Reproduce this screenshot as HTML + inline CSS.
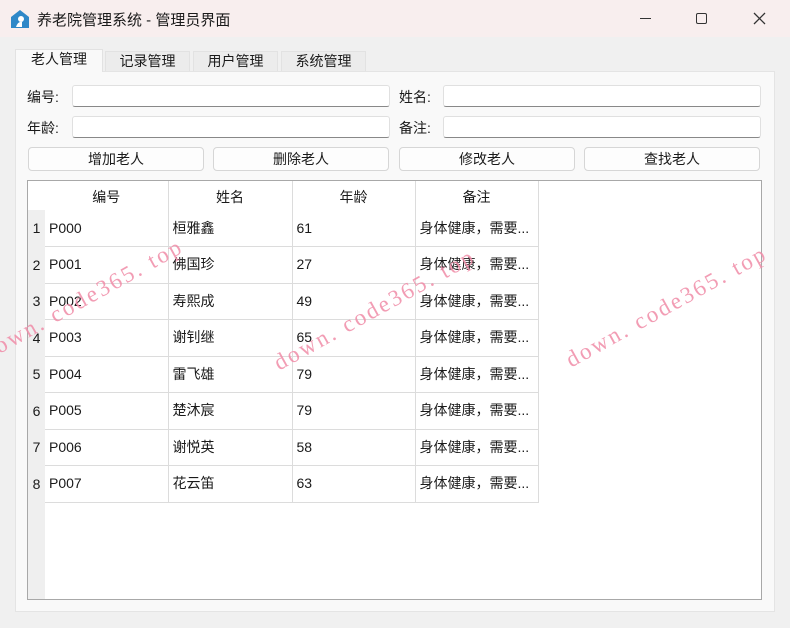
<!DOCTYPE html>
<html><head><meta charset="utf-8"><style>
*{margin:0;padding:0;box-sizing:border-box}
body{width:790px;height:628px;overflow:hidden;background:#f0f0f0;font-family:"Liberation Sans","Noto Sans CJK SC",sans-serif;font-size:14px;color:#1a1a1a;position:relative}
.abs{position:absolute}
.title{left:0;top:0;width:790px;height:37px;background:#f8eeee}
.tab{top:51px;height:20px;background:#ececec;border:1px solid #e2e2e2;border-bottom:none;text-align:center;line-height:19px;font-size:14px}
.pane{left:15px;top:71px;width:760px;height:541px;background:#f9f9f9;border:1px solid #e4e4e4}
.lbl{font-size:14px}
.inp{height:22px;background:#fff;border:1px solid #e0e0e0;border-bottom:1px solid #888;border-radius:3px}
.btn{top:147px;height:24px;background:#fdfdfd;border:1px solid #d6d6d6;border-radius:4px;text-align:center;line-height:22px}
.tbl{left:27px;top:180px;width:735px;height:420px;background:#fff;border:1px solid #a8a8a8}
.rh{left:28px;top:212px;width:17px;height:387px;background:#efefef}
.cell{height:36.5px;border-right:1px solid #dcdcdc;border-bottom:1px solid #dcdcdc;line-height:31px;padding-left:4px}
.wm{color:#f08ca8;font-family:"Liberation Serif",serif;font-size:23px;letter-spacing:2.5px;transform:rotate(-29deg);transform-origin:left bottom;white-space:nowrap;opacity:.85}
</style></head><body>
<div class="abs title"></div>
<svg class="abs" style="left:10px;top:9px" width="20" height="20" viewBox="0 0 20 20"><path d="M10 1 L19 8 L19 19 L1 19 L1 8 Z" fill="#2f88c8"/><circle cx="11" cy="10" r="3" fill="#fff"/><path d="M6 18 Q8 12 12 13 L12 18Z" fill="#fff"/></svg>
<div class="abs" style="left:37px;top:9px;font-size:15px">养老院管理系统 - 管理员界面</div>
<div class="abs" style="left:640px;top:18px;width:11px;height:1px;background:#333"></div>
<div class="abs" style="left:696px;top:13px;width:11px;height:11px;border:1.3px solid #333;border-radius:2px"></div>
<svg class="abs" style="left:753px;top:12px" width="13" height="13"><path d="M1 1L12 12M12 1L1 12" stroke="#333" stroke-width="1.3"/></svg>

<div class="abs pane"></div>
<div class="abs tab" style="left:15px;width:88px;top:49px;height:23px;background:#f9f9f9">老人管理</div>
<div class="abs tab" style="left:105px;width:85px">记录管理</div>
<div class="abs tab" style="left:193px;width:85px">用户管理</div>
<div class="abs tab" style="left:281px;width:85px">系统管理</div>

<div class="abs lbl" style="left:27px;top:87px">编号:</div>
<div class="abs inp" style="left:72px;top:85px;width:318px"></div>
<div class="abs lbl" style="left:399px;top:87px">姓名:</div>
<div class="abs inp" style="left:443px;top:85px;width:318px"></div>
<div class="abs lbl" style="left:27px;top:118px">年龄:</div>
<div class="abs inp" style="left:72px;top:116px;width:318px"></div>
<div class="abs lbl" style="left:399px;top:118px">备注:</div>
<div class="abs inp" style="left:443px;top:116px;width:318px"></div>

<div class="abs btn" style="left:28px;width:176px">增加老人</div>
<div class="abs btn" style="left:213px;width:176px">删除老人</div>
<div class="abs btn" style="left:399px;width:176px">修改老人</div>
<div class="abs btn" style="left:584px;width:176px">查找老人</div>

<div class="abs tbl"></div>
<div class="abs rh"></div>
<div class="abs" style="left:45px;top:181px">
<table style="border-collapse:collapse;font-size:14px">
<tr style="height:31px;text-align:center"><td style="width:123px;border-right:1px solid #dcdcdc">编号</td><td style="width:124px;border-right:1px solid #dcdcdc">姓名</td><td style="width:123px;border-right:1px solid #dcdcdc">年龄</td><td style="width:123px;border-right:1px solid #dcdcdc">备注</td></tr>
</table></div>
<div class="abs" style="left:28px;top:210px;font-size:14px">
<table style="border-collapse:collapse">
<tbody>
<tr><td style="width:17px;text-align:center;background:#efefef">1</td><td class="cell" style="width:123px">P000</td><td class="cell" style="width:124px">桓雅鑫</td><td class="cell" style="width:123px">61</td><td class="cell" style="width:123px">身体健康，需要...</td></tr>
<tr><td style="text-align:center;background:#efefef">2</td><td class="cell">P001</td><td class="cell">佛国珍</td><td class="cell">27</td><td class="cell">身体健康，需要...</td></tr>
<tr><td style="text-align:center;background:#efefef">3</td><td class="cell">P002</td><td class="cell">寿熙成</td><td class="cell">49</td><td class="cell">身体健康，需要...</td></tr>
<tr><td style="text-align:center;background:#efefef">4</td><td class="cell">P003</td><td class="cell">谢钊继</td><td class="cell">65</td><td class="cell">身体健康，需要...</td></tr>
<tr><td style="text-align:center;background:#efefef">5</td><td class="cell">P004</td><td class="cell">雷飞雄</td><td class="cell">79</td><td class="cell">身体健康，需要...</td></tr>
<tr><td style="text-align:center;background:#efefef">6</td><td class="cell">P005</td><td class="cell">楚沐宸</td><td class="cell">79</td><td class="cell">身体健康，需要...</td></tr>
<tr><td style="text-align:center;background:#efefef">7</td><td class="cell">P006</td><td class="cell">谢悦英</td><td class="cell">58</td><td class="cell">身体健康，需要...</td></tr>
<tr><td style="text-align:center;background:#efefef">8</td><td class="cell">P007</td><td class="cell">花云笛</td><td class="cell">63</td><td class="cell">身体健康，需要...</td></tr>
</tbody></table></div>

<div class="abs wm" style="left:-10px;top:340px">down. code365. top</div>
<div class="abs wm" style="left:282px;top:350px">down. code365. top</div>
<div class="abs wm" style="left:574px;top:347px">down. code365. top</div>
</body></html>
